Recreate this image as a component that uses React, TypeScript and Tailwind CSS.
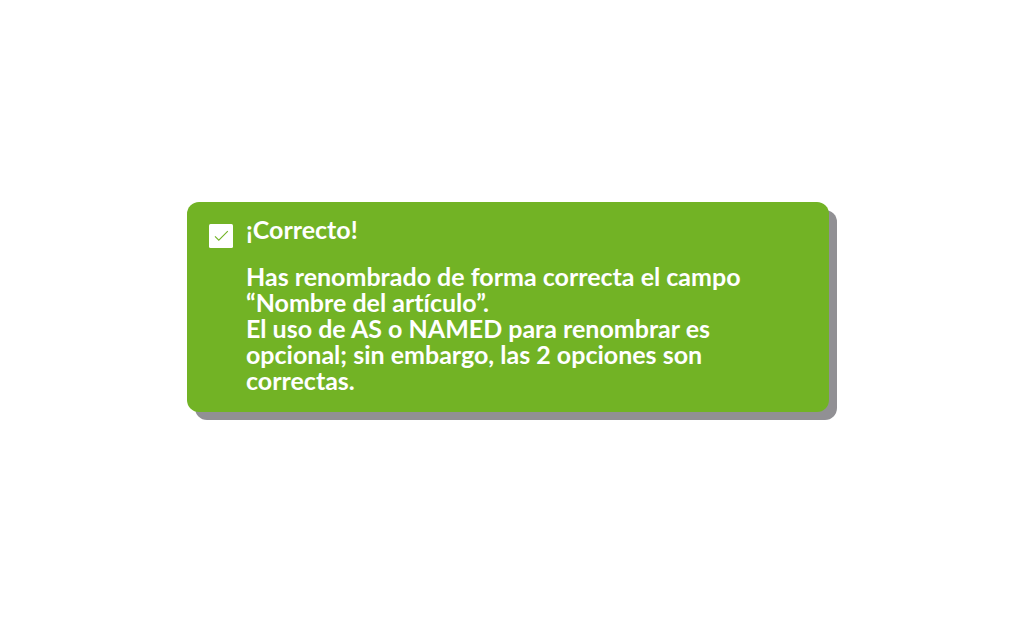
export default function App() {
  return (
    <main className="flex min-h-screen items-center justify-center bg-white p-4 font-['Lato',sans-serif]">
      <section
        role="status"
        className="mr-2 mb-[7px] flex w-full max-w-[642px] gap-[13px] rounded-xl bg-[#72b325] pt-[14px] pr-16 pb-[19px] pl-[22px] text-[25px] leading-[26px] font-bold text-white shadow-[8px_8px_0_#919094] [font-variant-ligatures:none]"
      >
        <svg viewBox="0 0 24 24" className="mt-2 size-6 shrink-0" aria-hidden="true">
          <rect width="24" height="24" rx="1.5" fill="#fff" />
          <path d="M6 12.3l3.8 3.9L18.8 7.2" fill="none" stroke="#72b325" strokeWidth="1.1" />
        </svg>
        <div>
          <h1>¡Correcto!</h1>
          <p className="mt-[21px]">
            Has renombrado de forma correcta el campo
            <br />
            “Nombre del artículo”.
            <br />
            El uso de AS o NAMED para renombrar es
            <br />
            opcional; sin embargo, las 2 opciones son
            <br />
            correctas.
          </p>
        </div>
      </section>
    </main>
  );
}
